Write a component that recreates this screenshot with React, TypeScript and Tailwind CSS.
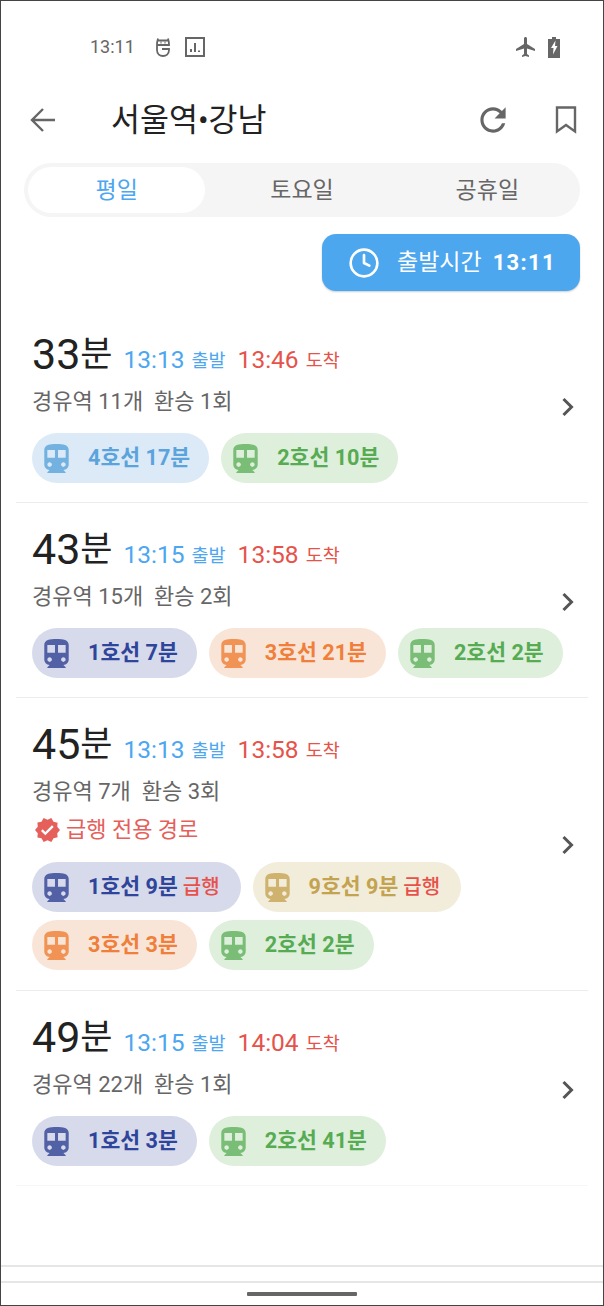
import React from 'react';
import { Clock } from 'lucide-react';

const FONT = "font-['Roboto','Noto_Sans_CJK_KR',sans-serif]";

interface Leg {
  label: string;
  bg: string;
  text: string;
  icon: string;
  express?: boolean;
}

interface Route {
  total: string;
  depart: string;
  arrive: string;
  info: string;
  expressOnly?: boolean;
  legs: Leg[];
}

const line1 = { bg: 'bg-[#d6daea]', text: 'text-[#2f459b]', icon: 'text-[#5261a6]' };
const line2 = { bg: 'bg-[#deefdc]', text: 'text-[#56ab53]', icon: 'text-[#79bd76]' };
const line3 = { bg: 'bg-[#f9e5d7]', text: 'text-[#ef7f3a]', icon: 'text-[#f09355]' };
const line4 = { bg: 'bg-[#dbeaf6]', text: 'text-[#5ba3dc]', icon: 'text-[#72b1e0]' };
const line9 = { bg: 'bg-[#f2ecdb]', text: 'text-[#c4a350]', icon: 'text-[#cfb26e]' };

const routes: Route[] = [
  {
    total: '33',
    depart: '13:13',
    arrive: '13:46',
    info: '경유역 11개  환승 1회',
    legs: [
      { label: '4호선 17분', ...line4 },
      { label: '2호선 10분', ...line2 },
    ],
  },
  {
    total: '43',
    depart: '13:15',
    arrive: '13:58',
    info: '경유역 15개  환승 2회',
    legs: [
      { label: '1호선 7분', ...line1 },
      { label: '3호선 21분', ...line3 },
      { label: '2호선 2분', ...line2 },
    ],
  },
  {
    total: '45',
    depart: '13:13',
    arrive: '13:58',
    info: '경유역 7개  환승 3회',
    expressOnly: true,
    legs: [
      { label: '1호선 9분', express: true, ...line1 },
      { label: '9호선 9분', express: true, ...line9 },
      { label: '3호선 3분', ...line3 },
      { label: '2호선 2분', ...line2 },
    ],
  },
  {
    total: '49',
    depart: '13:15',
    arrive: '14:04',
    info: '경유역 22개  환승 1회',
    legs: [
      { label: '1호선 3분', ...line1 },
      { label: '2호선 41분', ...line2 },
    ],
  },
];

const TrainIcon = ({ className }: { className: string }) => (
  <svg viewBox="4 2 16 19" className={`h-[29px] w-[25px] shrink-0 fill-current ${className}`}>
    <path d="M12 2c-4.42 0-8 .5-8 4v9.5C4 17.43 5.57 19 7.5 19L6 20.5v.5h12v-.5L16.5 19c1.93 0 3.5-1.57 3.5-3.5V6c0-3.5-3.58-4-8-4zM7.5 17c-.83 0-1.5-.67-1.5-1.5S6.67 14 7.5 14s1.5.67 1.5 1.5S8.33 17 7.5 17zm3.5-6H6V6h5v5zm5.5 6c-.83 0-1.5-.67-1.5-1.5s.67-1.5 1.5-1.5 1.5.67 1.5 1.5-.67 1.5-1.5 1.5zm1.5-6h-5V6h5v5z" />
  </svg>
);

const StatusBar = () => (
  <div className="mt-[23px] flex h-[46px] items-center pl-[89px] pr-[43px] text-[#666]">
    <span className="w-[44px] text-[18px] leading-none">13:11</span>
    <svg viewBox="0 0 16 20" className="ml-[21px] h-[20px] w-[16px] fill-none stroke-[#666] stroke-[1.8]">
      <path d="M3 1.5C2.5 3 2 5 2 8v5c0 4 3 6 6 6s6-2 6-6v-1H7M13 1.5c.5 1.5 1 3.5 1 6.5H2M3 3.5h10" />
      <path d="M5.5 5.5h1M9.5 5.5h1" />
    </svg>
    <svg viewBox="0 0 20 20" className="ml-[14px] h-[20px] w-[20px] fill-none stroke-[#666]">
      <rect x="1" y="1" width="18" height="18" strokeWidth="2" />
      <path d="M6 15v-3M10 15V6M14 15v-1.5" strokeWidth="2" />
    </svg>
    <div className="flex-1" />
    <svg viewBox="0 0 24 24" className="h-[24px] w-[24px] fill-[#666]">
      <path d="M21 16v-2l-8-5V3.5c0-.83-.67-1.5-1.5-1.5S10 2.67 10 3.5V9l-8 5v2l8-2.5V19l-2 1.5V22l3.5-1 3.5 1v-1.5L13 19v-5.5l8 2.5z" />
    </svg>
    <svg viewBox="0 0 12 21" className="ml-[10px] h-[21px] w-[12px]">
      <path d="M4 0h4v2h4v19H0V2h4z" fill="#666" />
      <path d="M7.5 3.5L3 11h2.5L5 17.5 9.5 9H7z" fill="#fff" />
    </svg>
  </div>
);

const Header = () => (
  <div className="mt-[22px] flex h-[56px] items-center pl-[29px] pr-[26px]">
    <svg viewBox="0 0 26 26" className="h-[26px] w-[26px] fill-none stroke-[#666] stroke-[2.4]">
      <path d="M25 13H2M13 2L2 13l11 11" />
    </svg>
    <h1 className="ml-[55px] mt-[2px] flex-1 text-[31.5px] font-normal leading-none text-[#222]">서울역•강남</h1>
    <svg viewBox="2.5 2.5 19 19" className="h-[30px] w-[30px] fill-[#666]">
      <path d="M17.65 6.35C16.2 4.9 14.21 4 12 4c-4.42 0-7.99 3.58-7.99 8s3.57 8 7.99 8c3.73 0 6.84-2.55 7.73-6h-2.08c-.82 2.33-3.04 4-5.65 4-3.31 0-6-2.69-6-6s2.69-6 6-6c1.66 0 3.14.69 4.22 1.78L13 11h7V4l-2.35 2.35z" />
    </svg>
    <svg viewBox="0 0 22 28" className="ml-[47px] h-[28px] w-[22px] fill-none stroke-[#666] stroke-[2.4]">
      <path d="M2 1.5h18v24l-9-6.5-9 6.5z" />
    </svg>
  </div>
);

const Tabs = () => (
  <div className="mx-[23px] mt-[15px] grid h-[54px] grid-cols-3 rounded-full bg-[#f5f5f5] text-[23px] leading-none text-[#666]">
    <div className="m-[4px] flex items-center justify-center rounded-full bg-white text-[#4da6f0]">평일</div>
    <div className="flex items-center justify-center">토요일</div>
    <div className="flex items-center justify-center">공휴일</div>
  </div>
);

const DepartButton = () => (
  <div className="mt-[17px] flex justify-end pr-[23px]">
    <div className="flex h-[57px] w-[258px] items-center rounded-[14px] bg-[#4da7ef] pl-[26px] text-white shadow-[0_1px_2px_rgba(0,0,0,0.2)]">
      <Clock size={32} strokeWidth={2} />
      <span className="ml-[17px] text-[23px] leading-none">출발시간</span>
      <span className="ml-[11px] text-[22px] font-bold leading-none tracking-[1.3px]">13:11</span>
    </div>
  </div>
);

const LegPill = ({ leg }: { leg: Leg }) => (
  <div className={`flex h-[50px] items-center rounded-full pl-[12px] ${leg.express ? 'pr-[21px]' : 'pr-[19px]'} ${leg.bg}`}>
    <TrainIcon className={leg.icon} />
    <span className={`ml-[19px] text-[21.6px] font-bold leading-none ${leg.text}`}>{leg.label}</span>
    {leg.express && <span className="ml-[5px] text-[20px] font-medium leading-none text-[#e8514a]">급행</span>}
  </div>
);

const RouteRow = ({ route, last }: { route: Route; last: boolean }) => (
  <div className={`mx-[15px] flex items-center border-b pl-[16px] pr-[13px] pt-[22px] ${route.expressOnly ? 'pb-[20px]' : 'pb-[19px]'} ${last ? 'border-[#f7f7f7]' : 'border-[#ececec]'}`}>
    <div className="min-w-0 flex-1">
      <div className="flex h-[48px] items-center">
        <span className="text-[43px] leading-none text-[#222]">{route.total}</span>
        <span className="text-[35px] leading-none text-[#222]">분</span>
        <span className="ml-[11px] mt-[13px] text-[24.5px] leading-none text-[#4da6f0]">{route.depart}</span>
        <span className="ml-[7px] mt-[15px] text-[18.5px] leading-none text-[#4da6f0]">출발</span>
        <span className="ml-[12px] mt-[13px] text-[24.5px] leading-none text-[#e5534b]">{route.arrive}</span>
        <span className="ml-[7px] mt-[15px] text-[18.5px] leading-none text-[#e5534b]">도착</span>
      </div>
      <div className="mt-[10px] flex h-[28px] items-center whitespace-pre text-[22px] leading-none text-[#666]">{route.info}</div>
      {route.expressOnly && (
        <div className="mb-[18px] mt-[10px] flex h-[28px] items-center text-[22px] leading-none text-[#e5605a]">
          <svg viewBox="1 1.5 22 21" className="ml-[3px] h-[24px] w-[25px] fill-current">
            <path d="M23 12l-2.44-2.79.34-3.69-3.61-.82-1.89-3.2L12 2.96 8.6 1.5 6.71 4.69 3.1 5.5l.34 3.7L1 12l2.44 2.79-.34 3.7 3.61.82L8.6 22.5l3.4-1.47 3.4 1.46 1.89-3.19 3.61-.82-.34-3.69L23 12zm-12.91 4.72l-3.8-3.81 1.48-1.48 2.32 2.33 5.85-5.87 1.48 1.48-7.33 7.35z" />
          </svg>
          <span className="ml-[6px]">급행 전용 경로</span>
        </div>
      )}
      <div className={`flex flex-wrap gap-x-[12px] gap-y-[8px] ${route.expressOnly ? '' : 'mt-[17px]'}`}>
        {route.legs.map((leg, i) => (
          <LegPill key={i} leg={leg} />
        ))}
      </div>
    </div>
    <svg viewBox="0 0 14 20" className="-ml-[3px] h-[20px] w-[14px] shrink-0 fill-none stroke-[#555] stroke-[3]">
      <path d="M2.5 2l8 8-8 8" />
    </svg>
  </div>
);

export default function App() {
  return (
    <div className={`flex h-[1306px] w-[604px] flex-col border border-[#444] bg-white ${FONT}`}>
      <StatusBar />
      <Header />
      <Tabs />
      <DepartButton />
      <div className="mt-[17px] flex-1">
        {routes.map((route, i) => (
          <RouteRow key={i} route={route} last={i === routes.length - 1} />
        ))}
      </div>
      <div className="h-[18px] border-y-2 border-[#e6e6e6]" />
      <div className="flex h-[22px] justify-center pt-[9px]">
        <div className="h-[4px] w-[110px] rounded-[1px] bg-[#666]" />
      </div>
    </div>
  );
}
